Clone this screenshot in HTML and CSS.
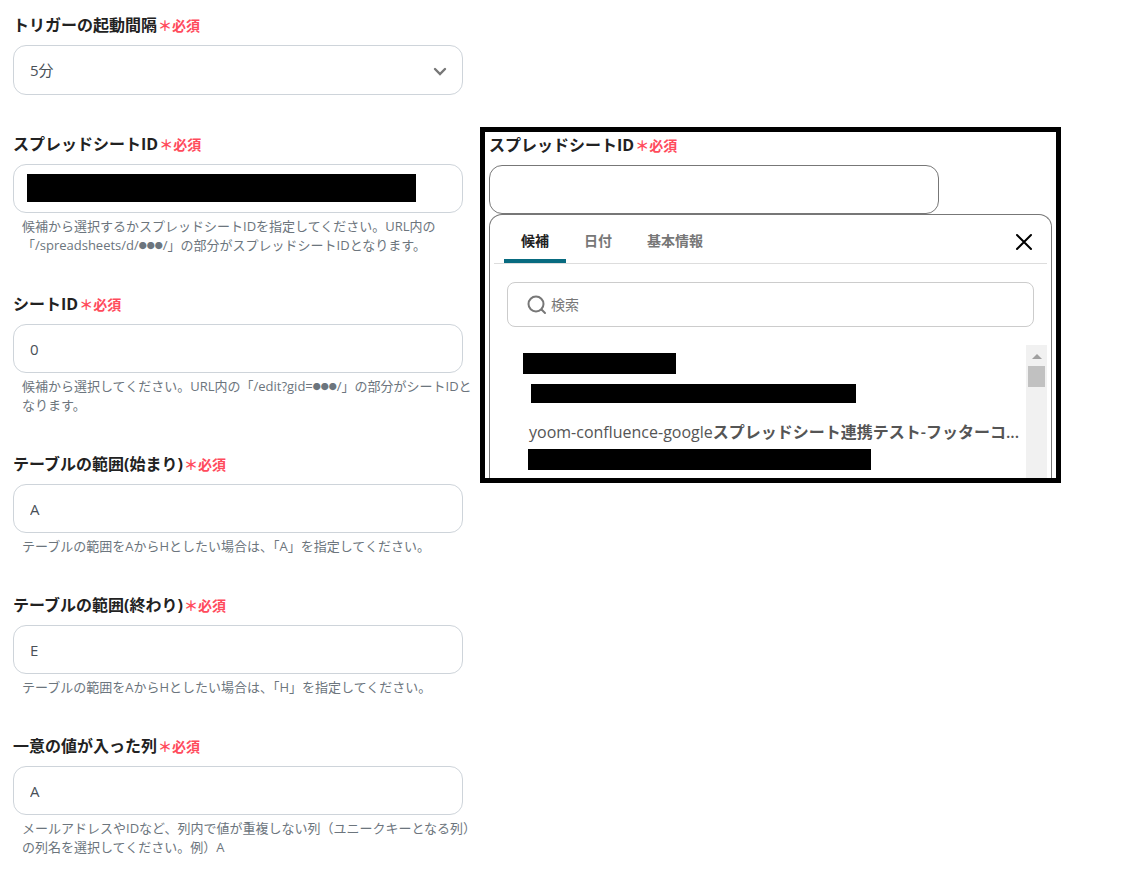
FILE: index.html
```html
<!DOCTYPE html>
<html lang="ja">
<head>
    <meta charset="UTF-8">
    <meta name="viewport" content="width=device-width, initial-scale=1.0">
    <title>スプレッドシート設定</title>
    <link rel="stylesheet" href="styles.css">
</head>
<body>
    <main class="page">
        <form class="form">
            <div class="field">
                <label class="label" for="interval">トリガーの起動間隔<span class="required">＊必須</span></label>
                <div class="control">
                    <select class="input select" id="interval">
                        <option>5分</option>
                    </select>
                    <svg class="chevron" width="14" height="10" viewBox="0 0 14 10"><path d="M2 2l5 5 5-5" fill="none" stroke="#777" stroke-width="2.4" stroke-linecap="round"/></svg>
                </div>
            </div>
            <div class="field">
                <label class="label" for="spreadsheetId">スプレッドシートID<span class="required">＊必須</span></label>
                <div class="control">
                    <input class="input" type="text" id="spreadsheetId">
                    <span class="mask mask-input"></span>
                </div>
                <p class="hint">候補から選択するかスプレッドシートIDを指定してください。URL内の<br>「/spreadsheets/d/<span class="dots">●●●</span>/」の部分がスプレッドシートIDとなります。</p>
            </div>
            <div class="field">
                <label class="label" for="sheetId">シートID<span class="required">＊必須</span></label>
                <input class="input" type="text" id="sheetId" value="0">
                <p class="hint">候補から選択してください。URL内の「/edit?gid=<span class="dots">●●●</span>/」の部分がシートIDと<br>なります。</p>
            </div>
            <div class="field">
                <label class="label" for="rangeStart">テーブルの範囲(始まり)<span class="required">＊必須</span></label>
                <input class="input" type="text" id="rangeStart" value="A">
                <p class="hint">テーブルの範囲をAからHとしたい場合は、「A」を指定してください。</p>
            </div>
            <div class="field">
                <label class="label" for="rangeEnd">テーブルの範囲(終わり)<span class="required">＊必須</span></label>
                <input class="input" type="text" id="rangeEnd" value="E">
                <p class="hint">テーブルの範囲をAからHとしたい場合は、「H」を指定してください。</p>
            </div>
            <div class="field">
                <label class="label" for="uniqueColumn">一意の値が入った列<span class="required">＊必須</span></label>
                <input class="input" type="text" id="uniqueColumn" value="A">
                <p class="hint">メールアドレスやIDなど、列内で値が重複しない列（ユニークキーとなる列）<br>の列名を選択してください。例）A</p>
            </div>
        </form>

        <section class="preview">
            <label class="label" for="previewId">スプレッドシートID<span class="required">＊必須</span></label>
            <input class="input input-active" type="text" id="previewId">
            <div class="dropdown">
                <div class="tabs">
                    <button class="tab active" type="button">候補</button>
                    <button class="tab" type="button">日付</button>
                    <button class="tab" type="button">基本情報</button>
                    <button class="close" type="button" aria-label="閉じる">
                        <svg width="18" height="18" viewBox="0 0 18 18"><path d="M2 2l14 14M16 2L2 16" fill="none" stroke="#000" stroke-width="2" stroke-linecap="round"/></svg>
                    </button>
                </div>
                <div class="search">
                    <svg width="20" height="20" viewBox="0 0 20 20"><g fill="none" stroke="#777" stroke-width="2" stroke-linecap="round"><circle cx="9" cy="9" r="7.5"/><path d="M14.5 14.5l3.5 3.5"/></g></svg>
                    <input class="search-input" type="text" placeholder="検索" aria-label="検索">
                </div>
                <div class="results">
                    <div class="list">
                        <span class="mask mask-a"></span>
                        <span class="mask mask-b"></span>
                        <a class="item" href="#"><span class="latin">yoom-confluence-google</span>スプレッドシート連携テスト-フッターコ...</a>
                        <span class="mask mask-c"></span>
                    </div>
                    <div class="scrollbar">
                        <svg width="10" height="5" viewBox="0 0 10 5"><path d="M0 5l5-5 5 5z" fill="#a0a0a0"/></svg>
                        <span class="thumb"></span>
                    </div>
                </div>
            </div>
        </section>
    </main>
</body>
</html>
```
FILE: styles.css
```css
* {
    box-sizing: border-box;
}
body {
    margin: 0;
    padding: 13px;
    background: #fff;
    color: #222;
    font-family: "Open Sans", "Noto Sans CJK JP", sans-serif;
    font-size: 14px;
}
input, select, button {
    font-family: inherit;
}
.page {
    display: grid;
    grid-template-columns: minmax(0, 450px) minmax(0, 581px);
    gap: 17px;
    align-items: start;
}
.form {
    display: flex;
    flex-direction: column;
    gap: 37px;
}
.label {
    display: block;
    margin-bottom: 8px;
    font-size: 16px;
    font-weight: bold;
    line-height: 24px;
    white-space: nowrap;
}
.required {
    margin-left: 1px;
    color: #ff4b5c;
    font-size: 14px;
    line-height: 1;
}
.control {
    position: relative;
}
.input {
    display: block;
    width: 100%;
    height: 49px;
    padding: 0 16px;
    border: 1px solid #ced4da;
    border-radius: 13px;
    background: #fff;
    color: #495057;
    font-size: 15px;
}
.select {
    height: 50px;
    appearance: none;
}
.chevron {
    position: absolute;
    top: 22px;
    right: 16px;
    pointer-events: none;
}
.hint {
    margin: 4px 0 0;
    padding-left: 9px;
    color: #6c757d;
    font-size: 13px;
    line-height: 19px;
    white-space: nowrap;
}
.dots {
    font-size: 8px;
    line-height: 1;
    vertical-align: 1px;
}
.mask {
    display: block;
    background: #000;
}
.mask-input {
    position: absolute;
    top: 10px;
    left: 14px;
    width: 389px;
    max-width: 90%;
    height: 28px;
}

/* candidate picker */
.preview {
    margin-top: 114px;
    padding: 1px 4px 0;
    border: 5px solid #000;
}
.input-active {
    max-width: 450px;
    border-color: #777;
}
.dropdown {
    padding: 0 4px;
    border: 1px solid #777;
    border-bottom: 0;
    border-radius: 13px 13px 0 0;
}
.tabs {
    display: flex;
    gap: 1px;
    height: 49px;
    padding: 0 10px;
    border-bottom: 1px solid #ddd;
}
.tab {
    padding: 6px 17px 0;
    border: 0;
    border-bottom: 4px solid transparent;
    background: none;
    color: #777;
    font-size: 14px;
    font-weight: bold;
}
.tab.active {
    color: #222;
    background: linear-gradient(#086b80, #086b80) bottom / 100% 4px no-repeat border-box;
    border-radius: 4px 4px 0 0;
}
.close {
    display: flex;
    align-items: center;
    margin: 6px 4px 0 auto;
    padding: 0;
    border: 0;
    background: none;
}
.search {
    display: flex;
    align-items: center;
    gap: 4px;
    height: 45px;
    margin: 18px 13px;
    padding: 0 19px;
    border: 1px solid #ccc;
    border-radius: 8px;
}
.search-input {
    flex: 1;
    min-width: 0;
    padding: 0;
    border: 0;
    outline: 0;
    font-size: 14px;
}
.search-input::placeholder {
    color: #777;
}
.results {
    display: flex;
}
.list {
    flex: 1;
    min-width: 0;
    padding: 8px 8px 8px 29px;
}
.mask-a {
    width: 153px;
    height: 21px;
}
.mask-b {
    width: 325px;
    height: 19px;
    margin: 10px 0 0 8px;
}
.mask-c {
    width: 343px;
    height: 21px;
    margin-left: 5px;
}
.item {
    display: block;
    padding: 17px 0 5px 6px;
    color: #555;
    font-size: 16px;
    font-weight: 600;
    line-height: 24px;
    text-decoration: none;
    white-space: nowrap;
}
.latin {
    font-weight: 500;
}
.scrollbar {
    display: flex;
    flex-direction: column;
    align-items: center;
    width: 21px;
    padding-top: 9px;
    background: #f1f1f1;
}
.thumb {
    width: 17px;
    height: 21px;
    margin-top: 7px;
    background: #c1c1c1;
}
```
